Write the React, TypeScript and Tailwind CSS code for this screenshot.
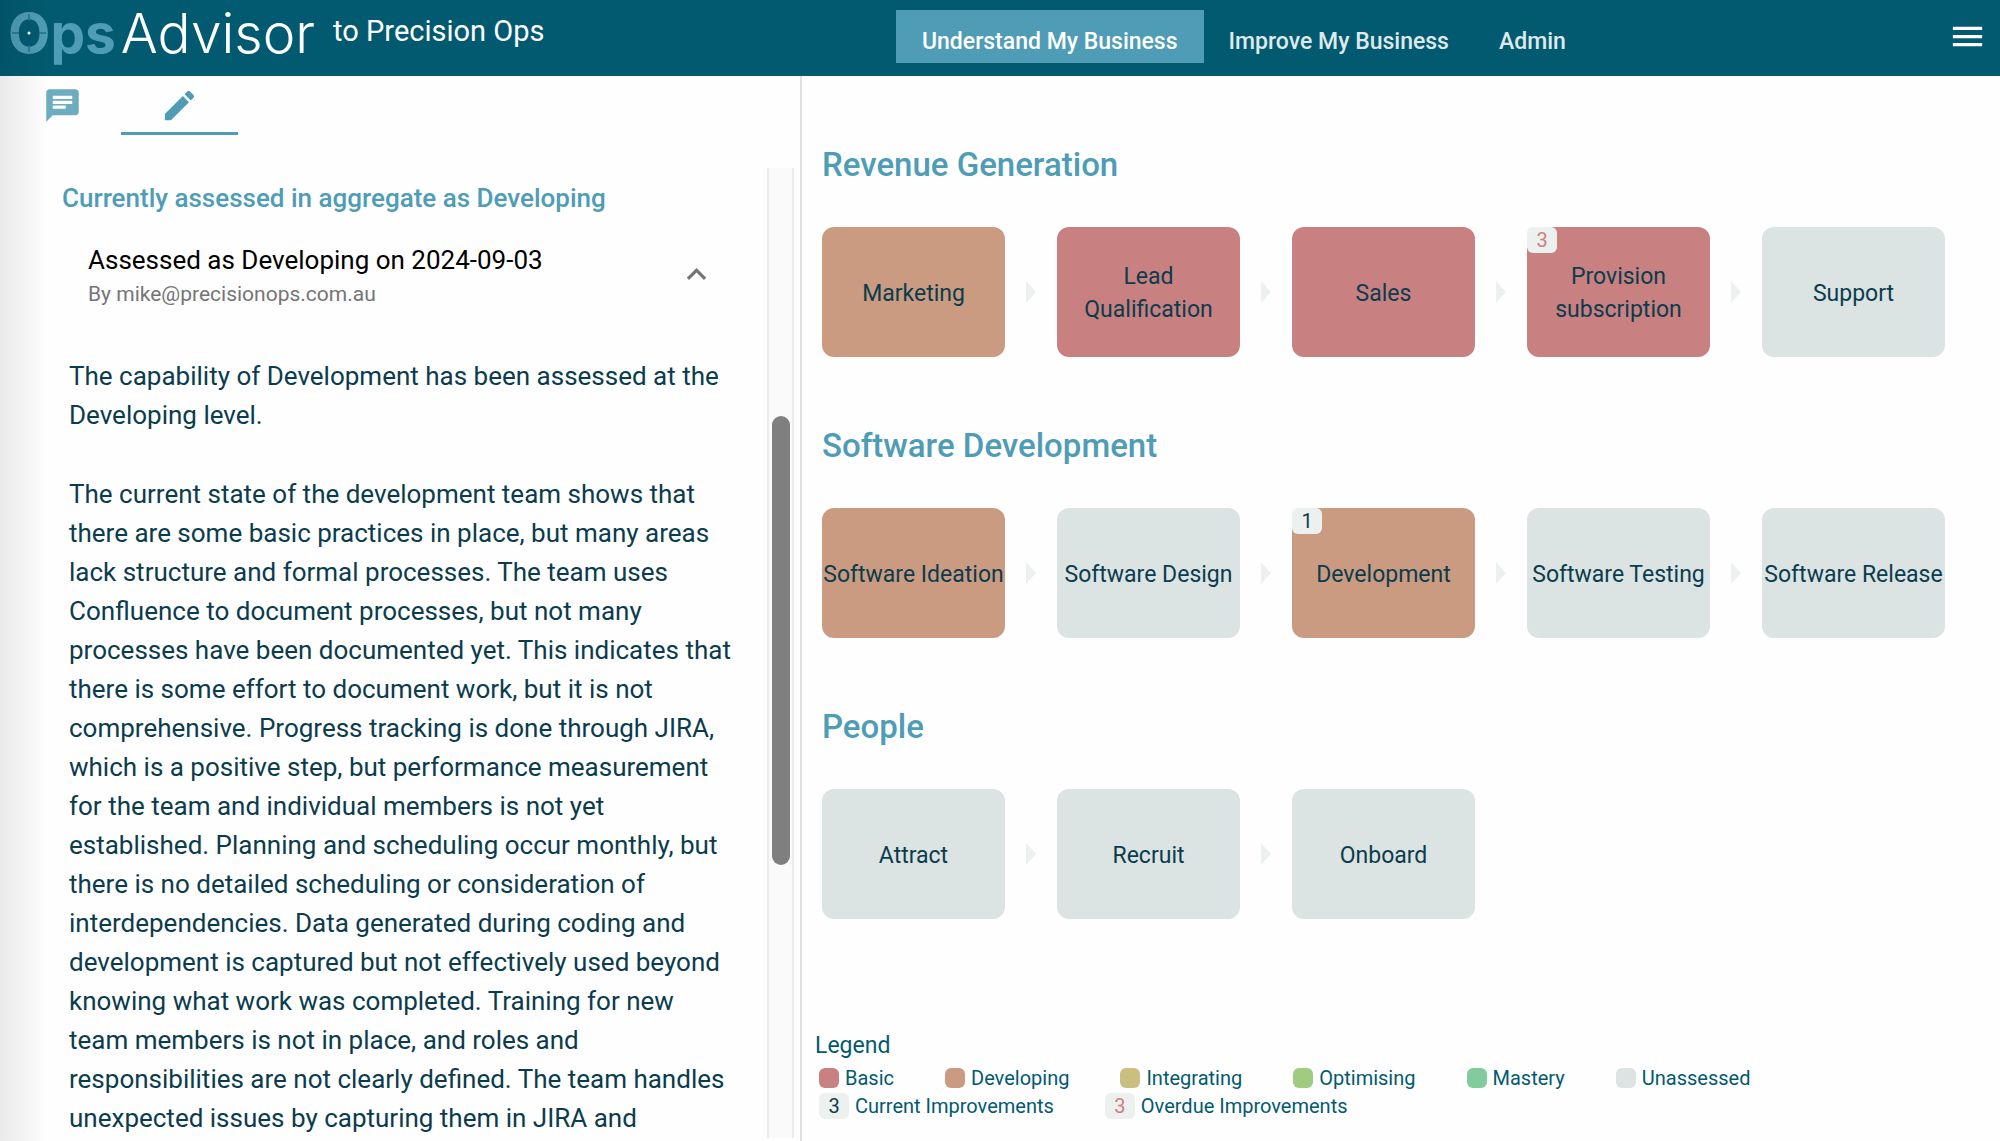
import { Fragment } from "react";
import { MdChat, MdEdit, MdExpandLess, MdMenu } from "react-icons/md";

type Level = "basic" | "developing" | "integrating" | "optimising" | "mastery" | "unassessed";

const levelColor: Record<Level, string> = {
  basic: "bg-[#c88180]",
  developing: "bg-[#ca9b81]",
  integrating: "bg-[#cbbf80]",
  optimising: "bg-[#a0cb81]",
  mastery: "bg-[#81cb9d]",
  unassessed: "bg-[#dbe4e3]",
};

type Capability = { name: string; level: Level; current?: number; overdue?: number };

const streams: { title: string; items: Capability[] }[] = [
  {
    title: "Revenue Generation",
    items: [
      { name: "Marketing", level: "developing" },
      { name: "Lead Qualification", level: "basic" },
      { name: "Sales", level: "basic" },
      { name: "Provision subscription", level: "basic", overdue: 3 },
      { name: "Support", level: "unassessed" },
    ],
  },
  {
    title: "Software Development",
    items: [
      { name: "Software Ideation", level: "developing" },
      { name: "Software Design", level: "unassessed" },
      { name: "Development", level: "developing", current: 1 },
      { name: "Software Testing", level: "unassessed" },
      { name: "Software Release", level: "unassessed" },
    ],
  },
  {
    title: "People",
    items: [
      { name: "Attract", level: "unassessed" },
      { name: "Recruit", level: "unassessed" },
      { name: "Onboard", level: "unassessed" },
    ],
  },
];

const legend: { label: string; level: Level }[] = [
  { label: "Basic", level: "basic" },
  { label: "Developing", level: "developing" },
  { label: "Integrating", level: "integrating" },
  { label: "Optimising", level: "optimising" },
  { label: "Mastery", level: "mastery" },
  { label: "Unassessed", level: "unassessed" },
];

function Badge({ count, overdue }: { count: number; overdue?: boolean }) {
  return (
    <span
      className={`flex h-[26px] w-[30px] items-center justify-center rounded-md bg-[#ecf0ef] text-xl leading-none ${
        overdue ? "text-[#d0807c]" : "text-[#0b3c4d]"
      }`}
    >
      {count}
    </span>
  );
}

function Logo() {
  return (
    <div className="flex items-center font-['Inter',sans-serif] text-[55px] leading-[66px]">
      <span className="relative font-bold text-[#4e9cb5]">
        Ops
        <svg className="absolute top-[13px] left-0 h-10 w-[42px]" viewBox="0 0 42 40" aria-hidden="true">
          <path d="M21 1v7M21 32v7M4 20h7M31 20h7" stroke="#1f728c" strokeWidth="1.5" />
          <circle cx="21" cy="20" r="1.5" fill="#fff" />
        </svg>
      </span>
      <span className="ml-[5px] font-light text-white">Advisor</span>
    </div>
  );
}

function Header() {
  return (
    <header className="flex h-[76px] shrink-0 items-start bg-[#025a70] text-white">
      <div className="flex w-[44.8%] shrink-0 items-start pl-2">
        <Logo />
        <p className="pl-[18px] text-[29px] leading-[62px]">to Precision Ops</p>
      </div>
      <nav className="mt-[10px] flex text-[23px] font-medium">
        <a href="#understand" aria-current="page" className="h-[53px] bg-[#4e9cb5] px-[26px] pt-[5px] leading-[53px]">
          Understand My Business
        </a>
        <a href="#improve" className="h-[53px] px-[25px] pt-[5px] leading-[53px] text-[#dfe9ec]">
          Improve My Business
        </a>
        <a href="#admin" className="h-[53px] px-[25px] pt-[5px] leading-[53px] text-[#dfe9ec]">
          Admin
        </a>
      </nav>
      <button type="button" aria-label="Menu" className="mt-[17px] mr-[13px] ml-auto">
        <MdMenu className="size-[39px]" />
      </button>
    </header>
  );
}

function AssessmentPanel() {
  return (
    <aside className="flex w-[40.1%] shrink-0 flex-col border-r-2 border-[#e0e0e0]">
      <div role="tablist" className="flex pl-1">
        <button
          type="button"
          role="tab"
          aria-selected="false"
          aria-label="Chat"
          className="flex h-[59px] w-[117px] justify-center pt-[10px] text-[#6bacc0]"
        >
          <MdChat className="size-[39px]" />
        </button>
        <button
          type="button"
          role="tab"
          aria-selected="true"
          aria-label="Assessment"
          className="flex h-[59px] w-[117px] justify-center border-b-3 border-[#4e9cb5] pt-[10px] text-[#4e9cb5]"
        >
          <MdEdit className="size-[39px]" />
        </button>
      </div>
      <div className="mt-[33px] mb-[3px] flex min-h-0 flex-1">
        <div className="min-w-0 flex-1 overflow-hidden pt-[11px]">
          <h2 className="pl-[62px] text-[26px] leading-[39px] font-medium text-[#4e9cb5]">
            Currently assessed in aggregate as Developing
          </h2>
          <button type="button" aria-expanded="true" className="mt-[23px] flex w-full items-center pr-[51px] pl-[88px] text-left">
            <span className="flex flex-1 flex-col">
              <span className="text-[26px] leading-[39px] text-black">Assessed as Developing on 2024-09-03</span>
              <span className="text-[21px] leading-7 text-[#757575]">By mike@precisionops.com.au</span>
            </span>
            <MdExpandLess className="size-[39px] text-[#757575]" />
          </button>
          <div className="mt-[49px] space-y-10 pr-7 pl-[69px] text-[26px] leading-[39px] text-[#0b3c4d]">
            <p>The capability of Development has been assessed at the Developing level.</p>
            <p>
              The current state of the development team shows that there are some basic practices in place, but many
              areas lack structure and formal processes. The team uses Confluence to document processes, but not many
              processes have been documented yet. This indicates that there is some effort to document work, but it is
              not comprehensive. Progress tracking is done through JIRA, which is a positive step, but performance
              measurement for the team and individual members is not yet established. Planning and scheduling occur
              monthly, but there is no detailed scheduling or consideration of interdependencies. Data generated during
              coding and development is captured but not effectively used beyond knowing what work was completed.
              Training for new team members is not in place, and roles and responsibilities are not clearly defined. The
              team handles unexpected issues by capturing them in JIRA and
            </p>
          </div>
        </div>
        <div className="mr-[6px] flex w-[27px] flex-col items-center border-x-2 border-[#ececec] bg-[#fafafa] pt-[248px]">
          <div className="h-[449px] w-[18px] rounded-full bg-[#7f7f7f]" />
        </div>
      </div>
    </aside>
  );
}

function Stream({ title, items }: { title: string; items: Capability[] }) {
  return (
    <section>
      <h2 className="text-[33px] leading-[48px] font-medium text-[#4e9cb5]">{title}</h2>
      <div className="mt-[38px] grid grid-cols-[minmax(0,1fr)_52px_minmax(0,1fr)_52px_minmax(0,1fr)_52px_minmax(0,1fr)_52px_minmax(0,1fr)] items-center">
        {items.map((item, i) => (
          <Fragment key={item.name}>
            {i > 0 && (
              <svg className="h-[22px] w-[10px] justify-self-center" viewBox="0 0 10 22" aria-hidden="true">
                <path d="M0 0L10 11L0 22Z" fill="#ecf0ef" />
              </svg>
            )}
            <button
              type="button"
              className={`relative flex h-[130px] items-center justify-center rounded-xl pt-0.5 text-center text-[23px] leading-[33px] text-[#0b3c4d] ${levelColor[item.level]}`}
            >
              {item.name}
              {(item.current || item.overdue) && (
                <span className="absolute top-0 left-0">
                  <Badge count={item.current ?? item.overdue ?? 0} overdue={!!item.overdue} />
                </span>
              )}
            </button>
          </Fragment>
        ))}
      </div>
    </section>
  );
}

function Legend() {
  return (
    <section className="pb-[21px] pl-[13px] text-[#025a70]">
      <h3 className="text-[23px] leading-[34px]">Legend</h3>
      <ul className="mt-px flex gap-[51px] pl-1 text-xl leading-7">
        {legend.map((l) => (
          <li key={l.label} className="flex items-center gap-[6px]">
            <span className={`size-5 rounded-md ${levelColor[l.level]}`} />
            {l.label}
          </li>
        ))}
      </ul>
      <ul className="flex gap-[51px] pl-1 text-xl leading-7">
        <li className="flex items-center gap-[6px]">
          <Badge count={3} />
          Current Improvements
        </li>
        <li className="flex items-center gap-[6px]">
          <Badge count={3} overdue />
          Overdue Improvements
        </li>
      </ul>
    </section>
  );
}

export default function App() {
  return (
    <div className="relative flex h-screen flex-col overflow-hidden bg-[#fefefe] font-['Roboto',sans-serif]">
      <Header />
      <div className="flex min-h-0 flex-1">
        <AssessmentPanel />
        <main className="flex min-w-0 flex-1 flex-col justify-between">
          <div className="space-y-[65px] pt-[65px] pr-[55px] pl-5">
            {streams.map((s) => (
              <Stream key={s.title} {...s} />
            ))}
          </div>
          <Legend />
        </main>
      </div>
      <div className="pointer-events-none absolute inset-y-0 left-0 w-12 bg-linear-to-r from-black/8 to-transparent" />
    </div>
  );
}
